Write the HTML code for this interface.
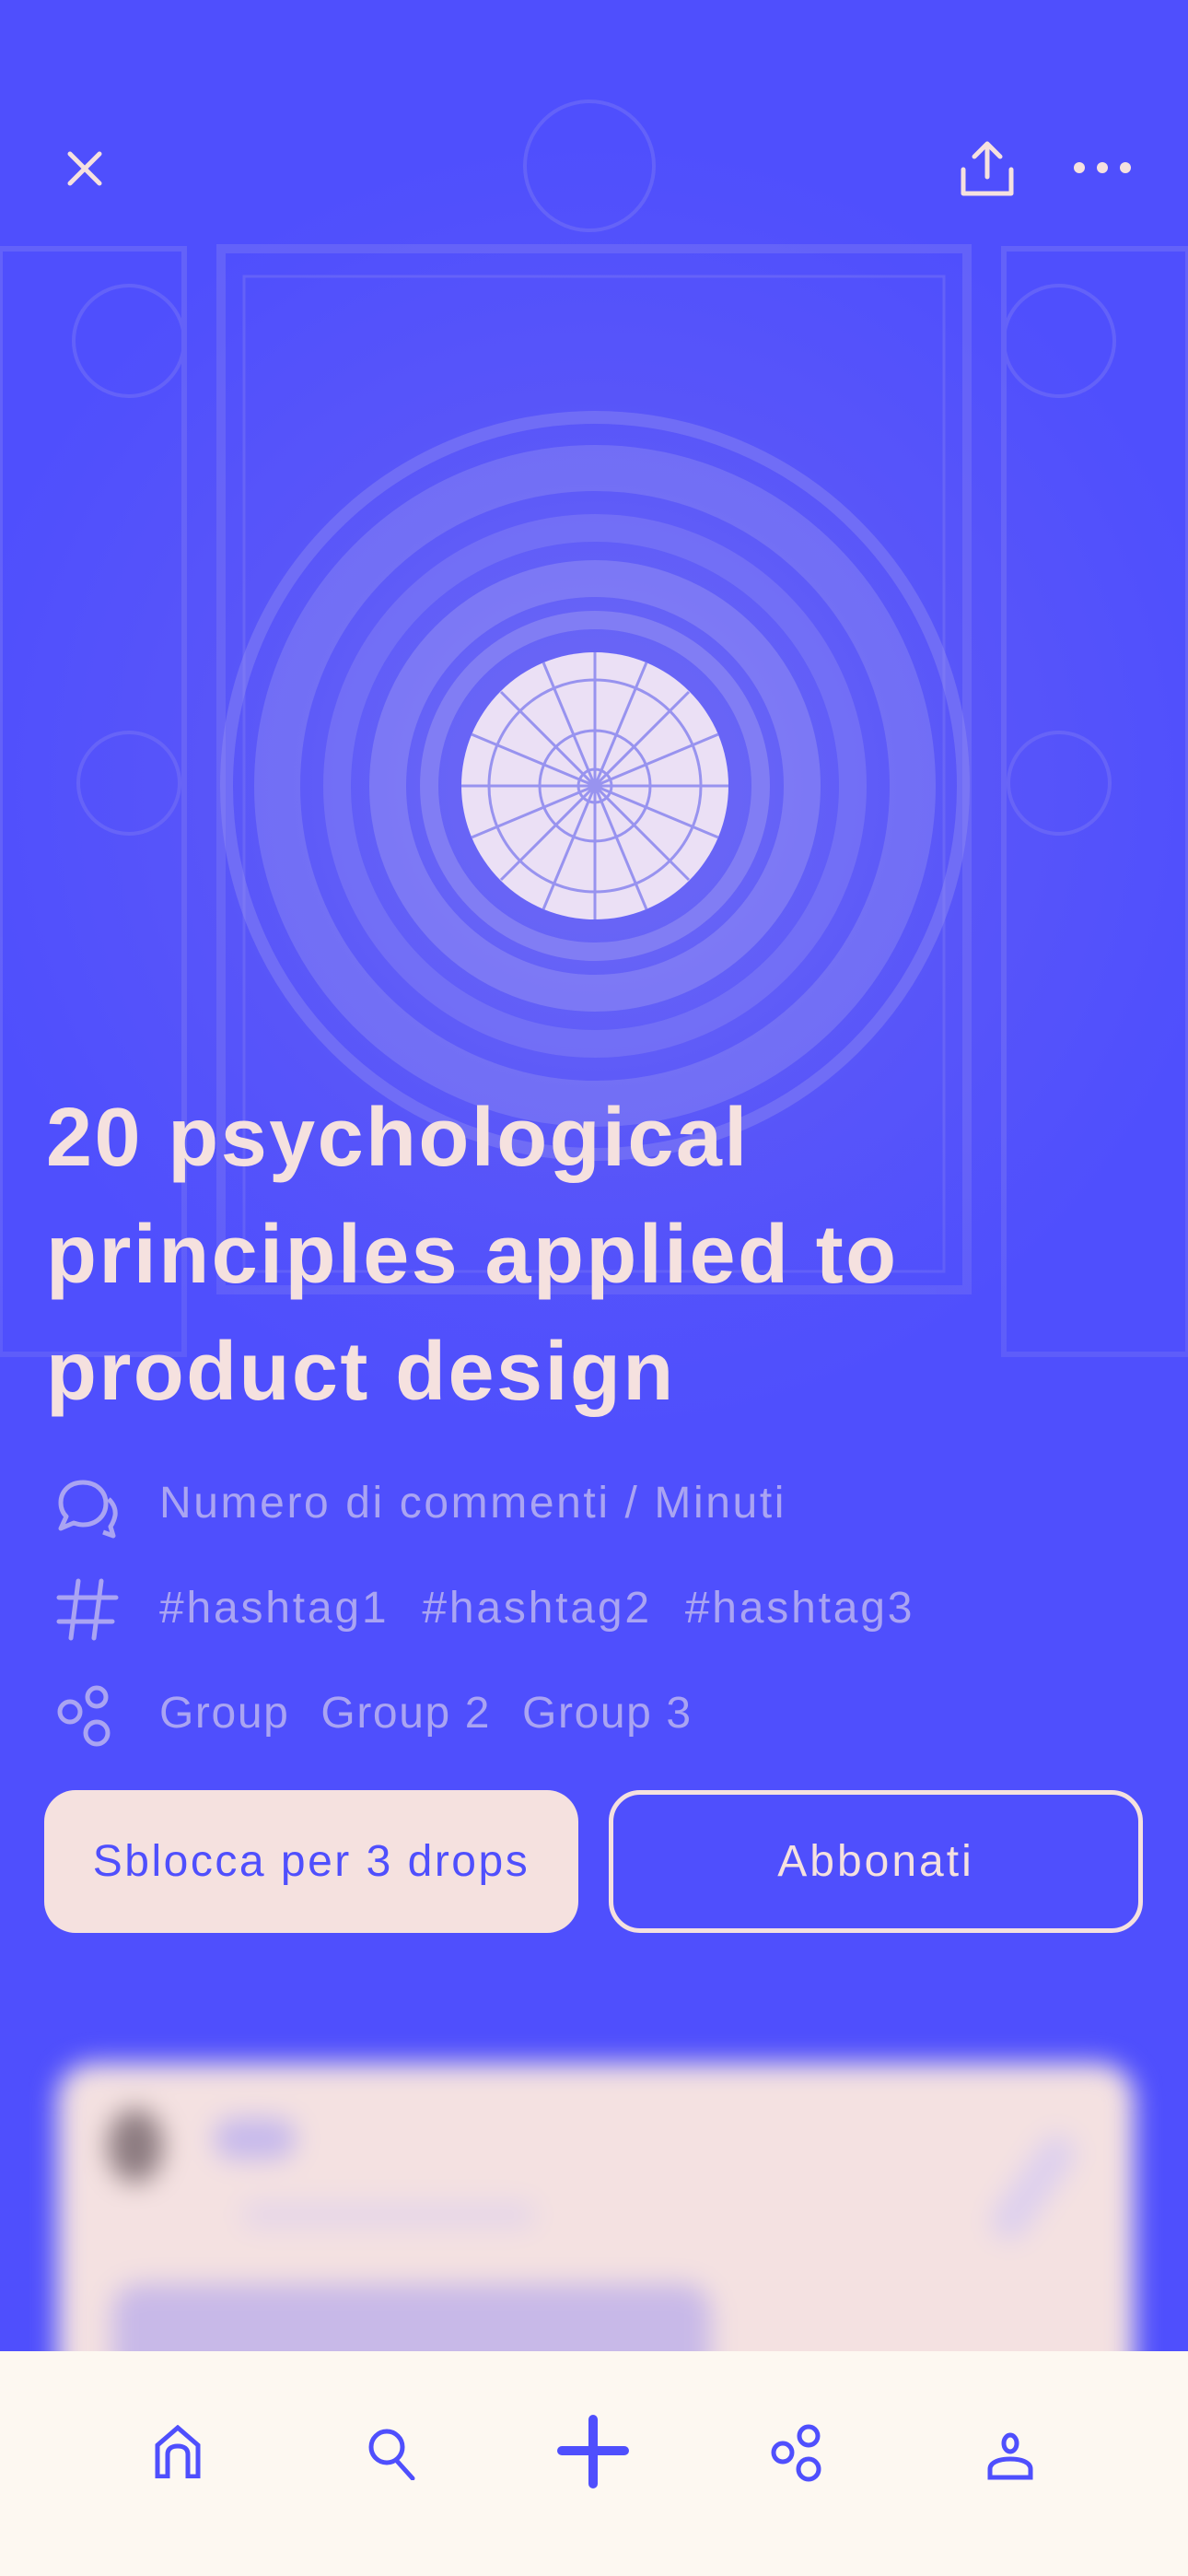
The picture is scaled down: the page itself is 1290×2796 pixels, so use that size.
<!DOCTYPE html>
<html><head><meta charset="utf-8"><style>
html,body{margin:0;padding:0;}
body{width:1290px;height:2796px;position:relative;overflow:hidden;background:#4f4ffd;font-family:"Liberation Sans",sans-serif;}
.bg{position:absolute;left:0;top:0;width:1290px;height:2560px;}
.title{position:absolute;left:50px;top:1172px;color:#f5e1df;font-weight:bold;font-size:90px;line-height:127px;letter-spacing:2.4px;margin:0;white-space:nowrap;}
.row{position:absolute;left:173px;color:#aaa4f2;font-size:48px;letter-spacing:2.6px;white-space:nowrap;}
.row span{margin-right:36px;}
.ic{position:absolute;left:60px;}
.btn{position:absolute;top:1943px;height:155px;border-radius:34px;box-sizing:border-box;display:flex;align-items:center;justify-content:center;font-size:48px;letter-spacing:2px;}
.card{position:absolute;left:62px;top:2239px;width:1170px;height:420px;background:#f4e1e1;border-radius:40px;filter:blur(14px);}
.nav{position:absolute;left:0;top:2552px;width:1290px;height:244px;background:#fdf8f1;}
</style></head><body>
<svg class="bg" viewBox="0 0 1290 2560">
<defs>
<radialGradient id="g" cx="646" cy="853" r="700" gradientUnits="userSpaceOnUse">
<stop offset="0" stop-color="#716df5"/><stop offset="0.6" stop-color="#5855f9"/><stop offset="1" stop-color="#4f4ffd"/>
</radialGradient>
<linearGradient id="fade" x1="0" y1="0" x2="0" y2="1"><stop offset="0.48" stop-color="#4f4ffd" stop-opacity="0"/><stop offset="0.85" stop-color="#4f4ffd" stop-opacity="1"/></linearGradient>
</defs>
<rect width="1290" height="2560" fill="#4f4ffd"/>
<rect x="0" y="0" width="1290" height="1700" fill="url(#g)"/>
<g fill="none" stroke="#7d79f5" opacity="0.45">
<rect x="240" y="270" width="810" height="1130" stroke-width="10"/>
<rect x="265" y="300" width="760" height="1080" stroke-width="3"/>
<rect x="0" y="270" width="200" height="1200" stroke-width="6"/>
<rect x="1090" y="270" width="200" height="1200" stroke-width="6"/>
<circle cx="140" cy="370" r="60" stroke-width="4"/>
<circle cx="1150" cy="370" r="60" stroke-width="4"/>
<circle cx="140" cy="850" r="55" stroke-width="4"/>
<circle cx="1150" cy="850" r="55" stroke-width="4"/>
<circle cx="640" cy="180" r="70" stroke-width="4"/>
</g>
<g fill="none" stroke="#9c97f2">
<circle cx="646" cy="853" r="400" stroke-width="14" opacity="0.35"/>
<circle cx="646" cy="853" r="345" stroke-width="50" opacity="0.35"/>
<circle cx="646" cy="853" r="280" stroke-width="30" opacity="0.3"/>
<circle cx="646" cy="853" r="225" stroke-width="40" opacity="0.45"/>
<circle cx="646" cy="853" r="180" stroke-width="20" opacity="0.5"/>
</g>
<circle cx="646" cy="853" r="145" fill="#ebe0f5"/>
<g stroke="#9893ef" stroke-width="3" fill="none">
<circle cx="646" cy="853" r="18"/><circle cx="646" cy="853" r="60"/><circle cx="646" cy="853" r="115"/>
<path d="M646 708V998M501 853H791M544 751L748 955M748 751L544 955M590 719L702 987M702 719L590 987M512 797L780 909M780 797L512 909"/>
</g>
<rect width="1290" height="2560" fill="url(#fade)"/>
</svg>

<svg style="position:absolute;left:72px;top:163px" width="40" height="40" viewBox="0 0 40 40"><path d="M4 4L36 36M36 4L4 36" stroke="#f5e1df" stroke-width="5" stroke-linecap="round"/></svg>
<svg style="position:absolute;left:1042px;top:152px" width="60" height="62" viewBox="0 0 60 62"><path d="M30 40V5M16 18L30 4L44 18M4 32V58H56V32" fill="none" stroke="#f5e1df" stroke-width="5" stroke-linecap="round" stroke-linejoin="round"/></svg>
<svg style="position:absolute;left:1164px;top:170px" width="66" height="24" viewBox="0 0 66 24"><circle cx="8" cy="12" r="6" fill="#f5e1df"/><circle cx="33" cy="12" r="6" fill="#f5e1df"/><circle cx="58" cy="12" r="6" fill="#f5e1df"/></svg>

<div class="title">20 psychological<br>principles applied to<br>product design</div>

<svg class="ic" style="top:1605px" width="70" height="66" viewBox="0 0 70 66"><g fill="none" stroke="#aaa4f2" stroke-width="5" stroke-linejoin="round"><path d="M30 4C15 4 6 14 6 26C6 32 8 37 12 41L6 54L20 48C23 49 27 50 30 50C45 50 55 40 55 27C55 14 45 4 30 4Z"/><path d="M58 22C63 27 66 33 65 40C64 45 62 49 60 52L63 62L52 58"/></g></svg>
<svg class="ic" style="top:1712px" width="70" height="70" viewBox="0 0 70 70"><path d="M25 4L17 66M50 4L42 66M4 22H66M4 48H62" stroke="#aaa4f2" stroke-width="5" stroke-linecap="round"/></svg>
<svg class="ic" style="top:1828px" width="66" height="70" viewBox="0 0 66 70"><g fill="none" stroke="#aaa4f2" stroke-width="5"><circle cx="16" cy="30" r="11"/><circle cx="45" cy="14" r="10"/><circle cx="45" cy="53" r="12"/></g></svg>

<div class="row" style="top:1604px">Numero di commenti / Minuti</div>
<div class="row" style="top:1718px;letter-spacing:2.8px"><span>#hashtag1</span><span>#hashtag2</span>#hashtag3</div>
<div class="row" style="top:1832px;letter-spacing:1.6px"><span style="margin-right:34px">Group</span><span style="margin-right:34px">Group 2</span>Group 3</div>

<div class="btn" style="left:48px;width:580px;background:#f5e1df;color:#4f4ffd;letter-spacing:2.5px">Sblocca per 3 drops</div>
<div class="btn" style="left:661px;width:580px;border:5px solid #f5e1df;color:#f5e1df;letter-spacing:3px">Abbonati</div>

<div class="card">
<div style="position:absolute;left:55px;top:50px;width:60px;height:80px;border-radius:50%;background:#8c7b80;"></div>
<div style="position:absolute;left:170px;top:60px;width:90px;height:45px;border-radius:25px;background:#c6b9ec;"></div>
<div style="position:absolute;left:200px;top:150px;width:320px;height:30px;border-radius:15px;background:#e6d6e8;"></div>
<div style="position:absolute;left:60px;top:240px;width:650px;height:110px;border-radius:30px;background:#c8b9e8;"></div>
<div style="position:absolute;left:1040px;top:70px;width:40px;height:130px;border-radius:20px;background:#ddd0ee;transform:rotate(35deg);"></div>
</div>

<div class="nav">
<svg style="position:absolute;left:168px;top:80px" width="50" height="58" viewBox="0 0 50 58"><path d="M3 56V22L25 3L47 22V56H36V32C36 26 32 23 25 23C18 23 14 26 14 32V56Z" fill="none" stroke="#4f4ffd" stroke-width="5" stroke-linejoin="miter"/></svg>
<svg style="position:absolute;left:398px;top:82px" width="56" height="58" viewBox="0 0 56 58"><circle cx="22" cy="22" r="17" fill="none" stroke="#4f4ffd" stroke-width="5"/><path d="M32 36L50 56" stroke="#4f4ffd" stroke-width="5" stroke-linecap="round"/></svg>
<svg style="position:absolute;left:604px;top:68px" width="80" height="82" viewBox="0 0 80 82"><path d="M40 6V76M6 40H74" stroke="#4f4ffd" stroke-width="10" stroke-linecap="round"/></svg>
<svg style="position:absolute;left:836px;top:78px" width="60" height="64" viewBox="0 0 60 64"><g fill="none" stroke="#4f4ffd" stroke-width="5"><circle cx="14" cy="32" r="10"/><circle cx="42" cy="14" r="10"/><circle cx="42" cy="50" r="11"/></g></svg>
<svg style="position:absolute;left:1072px;top:88px" width="50" height="52" viewBox="0 0 50 52"><ellipse cx="25" cy="12" rx="7" ry="9" fill="none" stroke="#4f4ffd" stroke-width="5"/><path d="M3 49V40C3 33 12 29 25 29C38 29 47 33 47 40V49Z" fill="none" stroke="#4f4ffd" stroke-width="5"/></svg>
</div>
</body></html>
